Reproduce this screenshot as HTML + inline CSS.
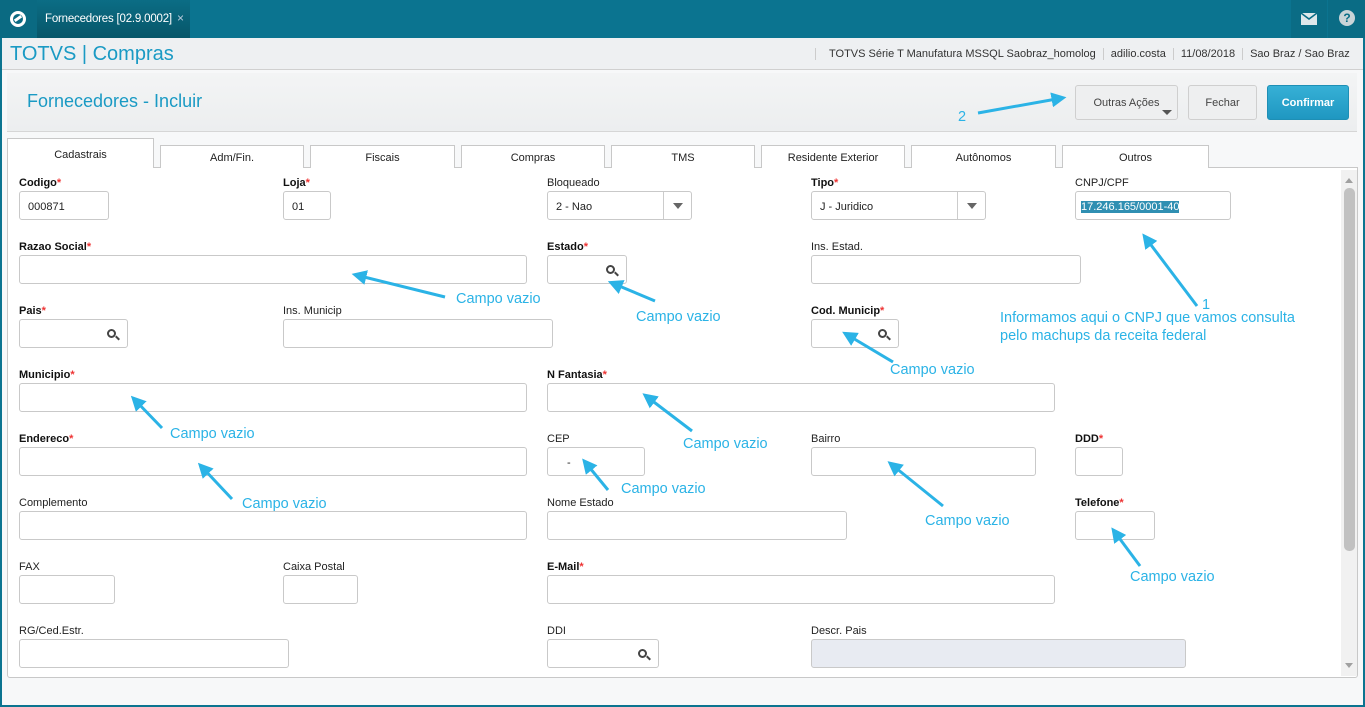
<!DOCTYPE html>
<html><head><meta charset="utf-8"><style>
*{box-sizing:border-box;margin:0;padding:0}
body{width:1365px;height:707px;overflow:hidden;font-family:"Liberation Sans",Arial,sans-serif;background:#fff;position:relative}
.a{position:absolute}
.top{left:0;top:0;width:1365px;height:38px;background:#0b7490}
.frame{left:0;top:38px;width:1365px;height:669px;border:2px solid #0b7490;border-top:0;background:#f7f8f9}
.lbl{position:absolute;font-size:11px;color:#222}
.b{font-weight:bold;color:#111}
.b i{color:#e33;font-style:normal}
.in{position:absolute;height:29px;border:1px solid #c9c9c9;border-radius:3px;background:#fff;font-size:11px;color:#222;padding:9px 0 0 8px}
.srch::after{content:"";position:absolute;right:11px;top:9px;width:5px;height:5px;border:2px solid #444;border-radius:50%}
.srch::before{content:"";position:absolute;right:7px;top:17px;width:5px;height:2px;background:#444;transform:rotate(45deg)}
.sel .ar{position:absolute;right:0;top:0;width:28px;height:27px;border-left:1px solid #ccc}
.sel .ar::after{content:"";position:absolute;left:9px;top:11px;border:5px solid transparent;border-top:6px solid #666}
.tab{position:absolute;top:145px;height:23px;border:1px solid #c8c8c8;border-bottom:0;background:#fff;font-size:11px;color:#222;text-align:center;padding-top:6px}
.ann{position:absolute;font-size:14.5px;color:#2bb3e6;white-space:nowrap}
.btn{position:absolute;top:85px;height:35px;border:1px solid #cfcfcf;border-radius:3px;background:#eeeff0;font-size:11px;color:#444;text-align:center;padding-top:11px}
</style></head><body>
<div class="a top"></div>
<div class="a" style="left:0;top:0;width:37px;height:38px;background:#0a6a82"></div>
<div class="a" style="left:10px;top:11px;width:16px;height:16px;border:3px solid #fff;border-radius:50%"></div>
<div class="a" style="left:14px;top:17px;width:8px;height:3px;background:#fff;transform:rotate(-35deg)"></div>
<div class="a" style="left:37px;top:0;width:153px;height:38px;background:linear-gradient(#0b6d85,#075669)"></div>
<div class="a" style="left:45px;top:13px;font-size:11.5px;color:#fff;white-space:nowrap;letter-spacing:-0.2px">Fornecedores [02.9.0002]</div>
<div class="a" style="left:177px;top:11px;font-size:12px;color:#bcd">×</div>
<div class="a" style="left:107px;top:32px;border:6px solid transparent;border-bottom:6px solid #eef0f2"></div>
<div class="a" style="left:1291px;top:0;width:36px;height:38px;background:#0a6c85"></div>
<div class="a" style="left:1328px;top:0;width:37px;height:38px;background:#0a6c85"></div>
<svg class="a" style="left:1301px;top:13px" width="16" height="12"><rect x="0" y="0" width="16" height="12" fill="#dfe7ea"/><path d="M0,0 L8,6 L16,0" stroke="#0a6c85" stroke-width="1.5" fill="none"/></svg>
<div class="a" style="left:1339px;top:10px;width:16px;height:16px;border-radius:50%;background:#c9d4d8;color:#0a6c85;font-size:12px;font-weight:bold;text-align:center;line-height:16px">?</div>
<div class="a frame"></div>
<div class="a" style="left:2px;top:38px;width:1361px;height:32px;background:#eef0f2;border-bottom:1px solid #d0d0d0"></div>
<div class="a" style="left:10px;top:43px;font-size:20px;color:#1a9ac4">TOTVS | Compras</div>
<div class="a" style="left:815px;top:48px;font-size:11px;color:#333;white-space:nowrap">
<span style="padding:0 7px 0 13px;border-left:1px solid #ccc">TOTVS Série T Manufatura MSSQL Saobraz_homolog</span><span style="padding:0 7px;border-left:1px solid #ccc">adilio.costa</span><span style="padding:0 7px;border-left:1px solid #ccc">11/08/2018</span><span style="padding:0 7px;border-left:1px solid #ccc">Sao Braz / Sao Braz</span></div>
<div class="a" style="left:7px;top:73px;width:1350px;height:59px;background:linear-gradient(#f3f4f5,#eceeef);border-bottom:1px solid #d6d6d6"></div>
<div class="a" style="left:27px;top:91px;font-size:18px;color:#1a9ac4">Fornecedores - Incluir</div>
<div class="btn" style="left:1075px;width:103px">Outras Ações<span style="position:absolute;right:5px;top:24px;border:5px solid transparent;border-top:5px solid #555"></span></div>
<div class="btn" style="left:1188px;width:69px">Fechar</div>
<div class="btn" style="left:1267px;width:82px;background:linear-gradient(#36b0d6,#1f97c1);border-color:#1e8fb5;color:#fff;font-weight:bold">Confirmar</div>
<div class="a" style="left:7px;top:167px;width:1351px;height:511px;border:1px solid #c8c8c8;border-radius:0 0 3px 3px;background:#fff"></div>
<div class="tab" style="left:7px;top:138px;width:147px;height:30px;padding-top:10px">Cadastrais</div>
<div class="tab" style="left:160px;width:144px">Adm/Fin.</div>
<div class="tab" style="left:310px;width:145px">Fiscais</div>
<div class="tab" style="left:461px;width:144px">Compras</div>
<div class="tab" style="left:611px;width:144px">TMS</div>
<div class="tab" style="left:761px;width:144px">Residente Exterior</div>
<div class="tab" style="left:911px;width:145px">Autônomos</div>
<div class="tab" style="left:1062px;width:147px">Outros</div>
<div class="a" style="left:1341px;top:170px;width:16px;height:506px;background:#f1f1f1"></div>
<div class="a" style="left:1344px;top:188px;width:11px;height:363px;background:#c1c1c1;border-radius:5px"></div>
<div class="a" style="left:1345px;top:174px;border:4px solid transparent;border-bottom:5px solid #a0a0a0"></div>
<div class="a" style="left:1345px;top:663px;border:4px solid transparent;border-top:5px solid #a0a0a0"></div>

<div class="lbl b" style="left:19px;top:177px">Codigo<i>*</i></div><div class="in" style="left:19px;top:191px;width:90px">000871</div>
<div class="lbl b" style="left:283px;top:177px">Loja<i>*</i></div><div class="in" style="left:283px;top:191px;width:48px">01</div>
<div class="lbl" style="left:547px;top:177px">Bloqueado</div><div class="in sel" style="left:547px;top:191px;width:145px">2 - Nao<span class="ar"></span></div>
<div class="lbl b" style="left:811px;top:177px">Tipo<i>*</i></div><div class="in sel" style="left:811px;top:191px;width:175px">J - Juridico<span class="ar"></span></div>
<div class="lbl" style="left:1075px;top:177px">CNPJ/CPF</div><div class="in" style="left:1075px;top:191px;width:156px;padding-left:5px"><span style="background:#2f8fb2;color:#fff">17.246.165/0001-40</span></div>

<div class="lbl b" style="left:19px;top:241px">Razao Social<i>*</i></div><div class="in" style="left:19px;top:255px;width:508px"></div>
<div class="lbl b" style="left:547px;top:241px">Estado<i>*</i></div><div class="in srch" style="left:547px;top:255px;width:80px"></div>
<div class="lbl" style="left:811px;top:241px">Ins. Estad.</div><div class="in" style="left:811px;top:255px;width:270px"></div>

<div class="lbl b" style="left:19px;top:305px">Pais<i>*</i></div><div class="in srch" style="left:19px;top:319px;width:109px"></div>
<div class="lbl" style="left:283px;top:305px">Ins. Municip</div><div class="in" style="left:283px;top:319px;width:270px"></div>
<div class="lbl b" style="left:811px;top:305px">Cod. Municip<i>*</i></div><div class="in srch" style="left:811px;top:319px;width:88px"></div>

<div class="lbl b" style="left:19px;top:369px">Municipio<i>*</i></div><div class="in" style="left:19px;top:383px;width:508px"></div>
<div class="lbl b" style="left:547px;top:369px">N Fantasia<i>*</i></div><div class="in" style="left:547px;top:383px;width:508px"></div>

<div class="lbl b" style="left:19px;top:433px">Endereco<i>*</i></div><div class="in" style="left:19px;top:447px;width:508px"></div>
<div class="lbl" style="left:547px;top:433px">CEP</div><div class="in" style="left:547px;top:447px;width:98px;padding-left:19px">-</div>
<div class="lbl" style="left:811px;top:433px">Bairro</div><div class="in" style="left:811px;top:447px;width:225px"></div>
<div class="lbl b" style="left:1075px;top:433px">DDD<i>*</i></div><div class="in" style="left:1075px;top:447px;width:48px"></div>

<div class="lbl" style="left:19px;top:497px">Complemento</div><div class="in" style="left:19px;top:511px;width:508px"></div>
<div class="lbl" style="left:547px;top:497px">Nome Estado</div><div class="in" style="left:547px;top:511px;width:300px"></div>
<div class="lbl b" style="left:1075px;top:497px">Telefone<i>*</i></div><div class="in" style="left:1075px;top:511px;width:80px"></div>

<div class="lbl" style="left:19px;top:561px">FAX</div><div class="in" style="left:19px;top:575px;width:96px"></div>
<div class="lbl" style="left:283px;top:561px">Caixa Postal</div><div class="in" style="left:283px;top:575px;width:75px"></div>
<div class="lbl b" style="left:547px;top:561px">E-Mail<i>*</i></div><div class="in" style="left:547px;top:575px;width:508px"></div>

<div class="lbl" style="left:19px;top:625px">RG/Ced.Estr.</div><div class="in" style="left:19px;top:639px;width:270px"></div>
<div class="lbl" style="left:547px;top:625px">DDI</div><div class="in srch" style="left:547px;top:639px;width:112px"></div>
<div class="lbl" style="left:811px;top:625px">Descr. Pais</div><div class="in" style="left:811px;top:639px;width:375px;background:#e8ebf2"></div>

<svg class="a" style="left:0;top:0" width="1365" height="707">
<defs><marker id="m" markerWidth="5" markerHeight="5" refX="3.5" refY="2.5" orient="auto"><path d="M0,0 L5,2.5 L0,5 Z" fill="#2bb3e6"/></marker></defs>
<g stroke="#2bb3e6" stroke-width="3" marker-end="url(#m)">
<line x1="978" y1="113" x2="1062" y2="98"/>
<line x1="445" y1="297" x2="356" y2="275"/>
<line x1="655" y1="301" x2="612" y2="283"/>
<line x1="1197" y1="306" x2="1145" y2="237"/>
<line x1="893" y1="362" x2="846" y2="334"/>
<line x1="162" y1="428" x2="134" y2="399"/>
<line x1="692" y1="431" x2="646" y2="396"/>
<line x1="232" y1="499" x2="201" y2="466"/>
<line x1="608" y1="490" x2="585" y2="462"/>
<line x1="943" y1="506" x2="891" y2="464"/>
<line x1="1140" y1="566" x2="1114" y2="531"/>
</g></svg>
<div class="ann" style="left:958px;top:109px">2</div>
<div class="ann" style="left:456px;top:291px">Campo vazio</div>
<div class="ann" style="left:636px;top:309px">Campo vazio</div>
<div class="ann" style="left:1202px;top:297px">1</div>
<div class="ann" style="left:1000px;top:310px">Informamos aqui o CNPJ que vamos consulta</div>
<div class="ann" style="left:1000px;top:328px">pelo machups da receita federal</div>
<div class="ann" style="left:890px;top:362px">Campo vazio</div>
<div class="ann" style="left:170px;top:426px">Campo vazio</div>
<div class="ann" style="left:683px;top:436px">Campo vazio</div>
<div class="ann" style="left:242px;top:496px">Campo vazio</div>
<div class="ann" style="left:621px;top:481px">Campo vazio</div>
<div class="ann" style="left:925px;top:513px">Campo vazio</div>
<div class="ann" style="left:1130px;top:569px">Campo vazio</div>
</body></html>
